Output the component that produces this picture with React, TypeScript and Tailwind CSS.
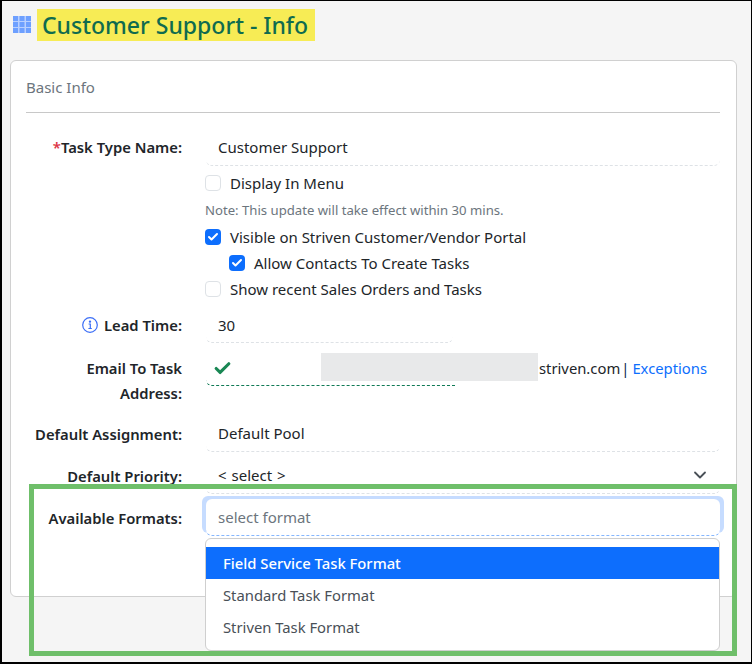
import { Check, ChevronDown } from "lucide-react";

function Label({ children }: { children: React.ReactNode }) {
  return <div className="w-[156px] shrink-0 text-right text-[14.8px] font-semibold text-[#212529]">{children}</div>;
}

function Box({ checked, label }: { checked?: boolean; label: string }) {
  return (
    <label className="flex h-[26px] items-center gap-[9px] text-[#212529]">
      {checked ? (
        <span className="flex h-4 w-4 items-center justify-center rounded-[4px] bg-[#0d6efd]">
          <Check className="h-3 w-3 text-white" strokeWidth={4} />
        </span>
      ) : (
        <span className="h-4 w-4 rounded-[4px] border border-[#dee2e6] bg-white" />
      )}
      {label}
    </label>
  );
}

export default function App() {
  return (
    <div className="relative h-[664px] w-[752px] overflow-hidden border-2 border-r border-t border-black bg-[#f5f5f5] font-['Noto_Sans',sans-serif] text-[15px] leading-[24px]">
      <div className="flex h-[59px] items-start pl-[11px] pt-[8px]">
        <svg className="mt-[7px] h-[18px] w-[18px]" viewBox="0 0 18 18" fill="#6ea0ff">
          <rect width="18" height="17" fill="#b9d0ff" />
          {[0, 6, 12].map((y) =>
            [0, 6.5, 13].map((x) => <rect key={`${x}-${y}`} x={x} y={y} width="5" height="5" />),
          )}
        </svg>
        <h1 className="ml-[6px] h-[32px] bg-[#f7ec55] pl-[5px] pr-[7px] text-[23px] font-medium leading-[32px] text-[#0f6b4f]">
          Customer Support - Info
        </h1>
      </div>

      <div className="ml-[8px] h-[537px] w-[727px] rounded-[6px] border border-[#d0d0d0] bg-white pl-[15px] pr-[16px]">
        <div className="flex h-[52px] items-center border-b border-[#c8c8c8] text-[#6c757d]">Basic Info</div>

        <div className="mt-[22px] flex gap-[23px]">
          <Label>
            <span className="text-[#dc3545]">*</span>Task Type Name:
          </Label>
          <div className="flex-1">
            <div className="ml-px h-[31px] rounded-b-[6px] border-b border-dashed border-[#dee2e6] px-[12px] text-[#212529]">
              Customer Support
            </div>
            <div className="mt-[4px]">
              <Box label="Display In Menu" />
            </div>
            <div className="mb-[1px] mt-[1px] text-[13.15px] leading-[26px] text-[#6c757d]">
              Note: This update will take effect within 30 mins.
            </div>
            <Box checked label="Visible on Striven Customer/Vendor Portal" />
            <div className="pl-[24px]">
              <Box checked label="Allow Contacts To Create Tasks" />
            </div>
            <Box label="Show recent Sales Orders and Tasks" />
          </div>
        </div>

        <div className="mt-[11px] flex gap-[23px]">
          <Label>
            <span className="inline-flex items-center justify-end gap-[6px]">
              <svg className="h-4 w-4" viewBox="0 0 16 16" fill="none" stroke="#3b6ef6" strokeWidth="1.2">
                <circle cx="8" cy="8" r="7.3" />
                <path d="M6.6 7h1.7v4.4M6.4 11.5h3.4" />
                <circle cx="8" cy="4.6" r=".6" fill="#3b6ef6" />
              </svg>
              Lead Time:
            </span>
          </Label>
          <div className="ml-px h-[30px] w-[247px] rounded-b-[6px] border-b border-dashed border-[#dee2e6] px-[12px] text-[#212529]">
            30
          </div>
        </div>

        <div className="mt-[13px] flex gap-[23px]">
          <Label>
            <div className="leading-[24.5px]">
              Email To Task
              <br />
              Address:
            </div>
          </Label>
          <div className="flex h-[30px] flex-1 items-start">
            <div className="relative ml-px h-[30px] w-[250px] shrink-0 rounded-bl-[6px] border-b border-dashed border-[#0f7a55]">
              <Check className="absolute left-[7px] top-[3px] h-[19px] w-[19px] text-[#198754]" strokeWidth={4} />
            </div>
            <div className="-ml-[135px] mt-[-3px] h-[28px] w-[217px] shrink-0 bg-[#e8e9ea]" />
            <div className="ml-px flex whitespace-nowrap text-[14.8px] text-[#212529]">
              <span>striven.com</span>
              <span className="ml-px text-[#0b1f4d]">|</span>
              <span className="ml-[3px] text-[#0d6efd]">Exceptions</span>
            </div>
          </div>
        </div>

        <div className="mt-[17px] flex gap-[23px]">
          <Label>Default Assignment:</Label>
          <div className="ml-px h-[30px] flex-1 rounded-b-[6px] border-b border-dashed border-[#dee2e6] px-[12px] leading-[22px] text-[#212529]">
            Default Pool
          </div>
        </div>

        <div className="mt-[12px] flex gap-[23px]">
          <Label>Default Priority:</Label>
          <div className="relative ml-px h-[30px] flex-1 rounded-b-[6px] border-b border-dashed border-[#dee2e6] px-[12px] leading-[22px] text-[#212529] [word-spacing:1px]">
            &lt; select &gt;
            <ChevronDown className="absolute right-[10px] top-[1px] h-[20px] w-[20px] text-[#495057]" strokeWidth={2.2} />
          </div>
        </div>

        <div className="mt-[12px] flex gap-[23px]">
          <Label>Available Formats:</Label>
          <div className="-mt-[7px] ml-px h-[37px] flex-1 rounded-[6px] border-b border-dashed border-[#86b7fe] bg-white px-[12px] leading-[36px] text-[#6c757d] shadow-[-4px_-3px_0_0_#c6dcff,4px_-3px_0_0_#c6dcff]">
            select format
          </div>
        </div>
      </div>

      <div className="absolute left-[27px] top-[483px] h-[172px] w-[708px] border-[5px] border-[#6fbf6a]" />
      <div className="absolute left-[203px] top-[537px] h-[113px] w-[515px] rounded-[6px] border border-[#cfcfcf] bg-white pt-[8px] text-[14.8px] text-[#495057]">
        <div className="h-[32px] bg-[#0d6efd] pl-[17px] font-medium leading-[32px] text-white">Field Service Task Format</div>
        <div className="h-[32px] pl-[17px] leading-[32px]">Standard Task Format</div>
        <div className="h-[32px] pl-[17px] leading-[32px]">Striven Task Format</div>
      </div>
    </div>
  );
}
